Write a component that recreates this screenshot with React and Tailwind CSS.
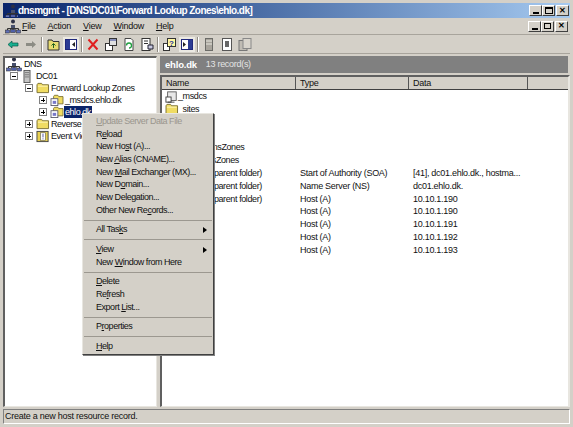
import clsx from "clsx";

const FONT = "font-['Liberation_Sans',Arial,sans-serif]";

function Folder() {
  return (
    <svg width="14" height="12" viewBox="0 0 15 13" className="shrink-0">
      <path d="M1 3 L2 1.5 H6 L7 3 H13.5 V11.5 H1 Z" fill="#f0dc62" stroke="#786e30" />
      <path d="M2 4.5 H12.5" stroke="#fff6c0" />
    </svg>
  );
}

function ZoneFolder() {
  return (
    <svg width="14" height="12" viewBox="0 0 16 14" className="shrink-0">
      <path d="M4 3 L5 1.5 H9 L10 3 H15 V11.5 H4 Z" fill="#f0dc62" stroke="#786e30" />
      <rect x="1" y="5.5" width="8" height="8" fill="#fff" stroke="#556" />
      <rect x="3" y="8" width="4" height="3.5" fill="#7878c8" />
    </svg>
  );
}

function DnsIcon() {
  return (
    <svg width="16" height="15" viewBox="0 0 16 15" className="shrink-0">
      <circle cx="8" cy="2.5" r="2" fill="#2c3044" />
      <path d="M6 6 H10 V9 H6 Z" fill="#47506c" />
      <path d="M8 9 V11 M2.5 11 V9.5 H13.5 V11" stroke="#333" fill="none" />
      <rect x="5.5" y="10.5" width="5" height="3" fill="#5060a8" stroke="#222" strokeWidth=".5" />
      <rect x="0.5" y="11" width="4" height="3" fill="#6070b8" stroke="#222" strokeWidth=".5" />
      <rect x="11.5" y="11" width="4" height="3" fill="#6070b8" stroke="#222" strokeWidth=".5" />
    </svg>
  );
}

function ServerIcon() {
  return (
    <svg width="12" height="13" viewBox="0 0 12 15" className="shrink-0">
      <rect x="2.5" y="0.5" width="7" height="14" fill="#c4c4c4" stroke="#505050" />
      <path d="M3.5 3 H8.5 M3.5 5.5 H8.5 M3.5 8 H8.5" stroke="#707070" />
    </svg>
  );
}

function EventIcon() {
  return (
    <svg width="14" height="13" viewBox="0 0 15 14" className="shrink-0">
      <rect x="1" y="1.5" width="12" height="11" fill="#e8d050" stroke="#444" />
      <rect x="5" y="3" width="5" height="8" fill="#fff" stroke="#555" strokeWidth=".6" />
      <path d="M7.5 4 V8 M7.5 9 V10" stroke="#5050a0" />
    </svg>
  );
}

function ListDnsIcon() {
  return (
    <svg width="13" height="12" viewBox="0 0 15 14" className="shrink-0">
      <rect x="3" y="1" width="10" height="10" fill="#e8e8e8" stroke="#555" />
      <rect x="1" y="7" width="6" height="6" fill="#fff" stroke="#333" />
      <path d="M3 13 H11" stroke="#333" />
    </svg>
  );
}

function Expander({ open }) {
  return (
    <span className="w-[8px] h-[8px] border border-[#808080] bg-white flex items-center justify-center relative shrink-0">
      <span className="w-[4px] h-px bg-black" />
      {!open && <span className="absolute w-px h-[4px] bg-black" />}
    </span>
  );
}

function TreeRow({ indent, open, icon, label, selected }) {
  return (
    <div className="flex items-center h-[12px]" style={{ paddingLeft: indent }}>
      <span className="w-[8px] mr-[3px] flex shrink-0">
        <Expander open={open} />
      </span>
      <span className="w-[14px] flex shrink-0">{icon}</span>
      <span className={clsx("px-px whitespace-nowrap leading-[12px]", selected && "bg-[#0a246a] text-white")}>{label}</span>
    </div>
  );
}

function TitleButton({ children, className }) {
  return (
    <span className={clsx("w-[13px] h-[11px] bg-[#d4d0c8] border border-t-white border-l-white border-r-[#404040] border-b-[#404040] flex items-center justify-center text-[8px] leading-none font-bold text-black", className)}>
      {children}
    </span>
  );
}

function ToolIcon({ children, className }) {
  return (
    <svg width="16" height="15" viewBox="0 0 16 15" className={clsx("shrink-0", className)}>
      {children}
    </svg>
  );
}

function Sep() {
  return <span className="w-[2px] h-[15px] border-l border-[#908c84] border-r border-r-white" />;
}

function Toolbar() {
  return (
    <div className="flex items-center h-[20px] pl-[2px] gap-[2px] border-t border-t-[#a8a49c] border-b border-b-[#a8a49c] shrink-0">
      <ToolIcon><path d="M3 7.5 L7 4 V6 H13 V9 H7 V11 Z" fill="#18b090" stroke="#0a5848" strokeWidth=".7" /></ToolIcon>
      <ToolIcon><path d="M13 7.5 L9 4 V6 H3 V9 H9 V11 Z" fill="#8c8c84" /></ToolIcon>
      <Sep />
      <ToolIcon><path d="M3 3 H7 L8 4.5 H14 V13 H3 Z" fill="#e8dc70" stroke="#333" /><path d="M8.5 11 V7 M6.5 8.5 L8.5 6.5 L10.5 8.5" stroke="#206020" fill="none" /></ToolIcon>
      <ToolIcon className="bg-[#ebe9e2]"><rect x="2.5" y="2.5" width="11" height="10" fill="#fff" stroke="#20287c" /><rect x="3" y="3" width="4" height="9" fill="#2c3c94" /><path d="M12 5 L9 7.5 L12 10 Z" fill="#222" /></ToolIcon>
      <Sep />
      <ToolIcon><path d="M3.5 2.5 L12.5 12.5 M12.5 2.5 L3.5 12.5" stroke="#e02020" strokeWidth="2" /></ToolIcon>
      <ToolIcon><rect x="2.5" y="6.5" width="7" height="7" fill="#fff" stroke="#333" /><rect x="6.5" y="1.5" width="7" height="7" fill="#e0e0e0" stroke="#333" /><path d="M7 3 H13" stroke="#2c3c94" /></ToolIcon>
      <ToolIcon><path d="M4 1.5 H10 L12 3.5 V13.5 H4 Z" fill="#fff" stroke="#444" /><path d="M5.5 8.5 A2.5 2.5 0 1 1 8 11" stroke="#20a040" fill="none" strokeWidth="1.3" /></ToolIcon>
      <ToolIcon><rect x="3" y="1.5" width="8" height="12" fill="#fff" stroke="#333" /><path d="M5 4 H9 M5 6.5 H9" stroke="#333" /><path d="M9 8 H14 V12 H9 Z" fill="#c8c8e0" stroke="#223" /></ToolIcon>
      <Sep />
      <ToolIcon><rect x="2.5" y="6.5" width="6" height="7" fill="#fff" stroke="#333" /><rect x="6.5" y="1.5" width="8" height="8" fill="#fff8a0" stroke="#333" /><text x="8" y="8.5" fontSize="8" fontWeight="700" fill="#2030a0" fontFamily="Liberation Sans, sans-serif">?</text></ToolIcon>
      <ToolIcon className="bg-[#ebe9e2]"><rect x="2.5" y="2.5" width="11" height="10" fill="#fff" stroke="#20287c" /><rect x="9" y="3" width="4" height="9" fill="#2c3c94" /><path d="M4 5 L7 7.5 L4 10 Z" fill="#222" /></ToolIcon>
      <Sep />
      <ToolIcon><rect x="4.5" y="1.5" width="7" height="12" fill="#a8a49c" stroke="#6c6c68" /><path d="M5 4 H11 M5 7 H11" stroke="#e8e8e0" /></ToolIcon>
      <ToolIcon><rect x="3.5" y="1.5" width="9" height="12" fill="#fff" stroke="#555" /><rect x="6" y="4" width="4" height="6" fill="#666" /></ToolIcon>
      <ToolIcon><rect x="2" y="3.5" width="8" height="10" fill="#c0bcb4" stroke="#777" /><rect x="6" y="1.5" width="8" height="10" fill="#d8d4cc" stroke="#888" /></ToolIcon>
    </div>
  );
}

const menuBar = [
  ["F", "ile"],
  ["A", "ction"],
  ["V", "iew"],
  ["W", "indow"],
  ["H", "elp"],
];

const tableRows = [
  ["_msdcs", "", "", "zone"],
  ["_sites", "", "", "folder"],
  ["_tcp", "", "", "folder"],
  ["_udp", "", "", "folder"],
  ["DomainDnsZones", "", "", "folder"],
  ["ForestDnsZones", "", "", "folder"],
  ["(same as parent folder)", "Start of Authority (SOA)", "[41], dc01.ehlo.dk., hostma...", "rec"],
  ["(same as parent folder)", "Name Server (NS)", "dc01.ehlo.dk.", "rec"],
  ["(same as parent folder)", "Host (A)", "10.10.1.190", "rec"],
  ["dc01", "Host (A)", "10.10.1.190", "rec"],
  ["srv1", "Host (A)", "10.10.1.191", "rec"],
  ["srv2", "Host (A)", "10.10.1.192", "rec"],
  ["srv3", "Host (A)", "10.10.1.193", "rec"],
];

const menuGroups = [
  [
    { pre: "", key: "U", post: "pdate Server Data File", disabled: true },
    { pre: "R", key: "e", post: "load" },
    { pre: "New Ho", key: "s", post: "t (A)..." },
    { pre: "New ", key: "A", post: "lias (CNAME)..." },
    { pre: "New ", key: "M", post: "ail Exchanger (MX)..." },
    { pre: "New D", key: "o", post: "main..." },
    { pre: "New Dele", key: "g", post: "ation..." },
    { pre: "Other New Re", key: "c", post: "ords..." },
  ],
  [{ pre: "All Tas", key: "k", post: "s", arrow: true }],
  [
    { pre: "", key: "V", post: "iew", arrow: true },
    { pre: "New ", key: "W", post: "indow from Here" },
  ],
  [
    { pre: "", key: "D", post: "elete" },
    { pre: "Re", key: "f", post: "resh" },
    { pre: "Export ", key: "L", post: "ist..." },
  ],
  [{ pre: "P", key: "r", post: "operties" }],
  [{ pre: "", key: "H", post: "elp" }],
];

function ContextMenu() {
  return (
    <div className="absolute left-[82px] top-[113px] w-[132px] bg-[#d4d0c8] border border-t-[#e8e6e0] border-l-[#e8e6e0] border-r-[#404040] border-b-[#404040] pt-px pb-px shadow-[1px_1px_0_#808080] tracking-[-0.47px] z-10">
      {menuGroups.map((group, i) => (
        <div key={i} className={clsx(i > 0 && "border-t border-t-[#9c9890] mt-[3px] pt-[3px] mx-px")}>
          {group.map((item) => (
            <div
              key={item.pre + item.key + item.post}
              className={clsx("h-[12.7px] pr-[5px] flex items-center justify-between whitespace-nowrap", i > 0 ? "pl-[12px]" : "pl-[13px]", item.disabled && "text-[#9a968e]")}
            >
              <span>
                {item.pre}
                <u>{item.key}</u>
                {item.post}
              </span>
              {item.arrow && <span className="w-0 h-0 border-y-[3.5px] border-y-transparent border-l-[4px] border-l-black" />}
            </div>
          ))}
        </div>
      ))}
    </div>
  );
}

export default function App() {
  return (
    <div className={clsx("relative w-[573px] h-[427px] overflow-hidden bg-[#d4d0c8] text-[9px] leading-[13px] text-[#111] flex flex-col p-[3px]", FONT)}>
      {/* title bar */}
      <div className="h-[15px] shrink-0 flex items-center pl-[2px] pr-px bg-gradient-to-r from-[#0a246a] to-[#a6caf0] text-white font-bold">
        <span className="w-[13px] h-[13px] shrink-0 flex overflow-hidden"><DnsIcon /></span>
        <span className="text-[10px] tracking-[-0.55px] whitespace-nowrap">dnsmgmt - [DNS\DC01\Forward Lookup Zones\ehlo.dk]</span>
        <span className="ml-auto flex items-center">
          <TitleButton><span className="w-[6px] h-[2px] bg-black mt-[5px]" /></TitleButton>
          <TitleButton><span className="w-[8px] h-[7px] border border-black border-t-2" /></TitleButton>
          <TitleButton className="ml-px">✕</TitleButton>
        </span>
      </div>

      {/* menu bar */}
      <div className="h-[16px] shrink-0 flex items-center pl-[2px] pr-[2px] tracking-[-0.25px]">
        <span className="w-[16px] shrink-0 flex"><DnsIcon /></span>
        <div className="flex ml-px gap-[12px]">
          {menuBar.map(([key, rest]) => (
            <span key={key}><u>{key}</u>{rest}</span>
          ))}
        </div>
        <span className="ml-auto flex items-center">
          <TitleButton><span className="w-[6px] h-[2px] bg-black mt-[5px]" /></TitleButton>
          <TitleButton><span className="w-[7px] h-[6px] border border-black" /></TitleButton>
          <TitleButton className="text-[#8c8880] ml-px">✕</TitleButton>
        </span>
      </div>

      <Toolbar />

      {/* panes */}
      <div className="flex flex-1 mt-[2px] min-h-0">
        <div className="w-[154px] bg-white border-t-2 border-l-2 border-[#606060] border-r border-r-[#e8e6e0] border-b border-b-[#e8e6e0] shrink-0 overflow-hidden tracking-[-0.45px]">
          <div className="flex items-center h-[12px]">
            <span className="w-[16px] ml-px flex shrink-0"><DnsIcon /></span>
            <span className="ml-[2px]">DNS</span>
          </div>
          <TreeRow indent={5} open icon={<ServerIcon />} label="DC01" />
          <TreeRow indent={20} open icon={<Folder />} label="Forward Lookup Zones" />
          <TreeRow indent={34} icon={<ZoneFolder />} label="_msdcs.ehlo.dk" />
          <TreeRow indent={34} icon={<ZoneFolder />} label="ehlo.dk" selected />
          <TreeRow indent={20} icon={<Folder />} label="Reverse Lookup Zones" />
          <TreeRow indent={20} icon={<EventIcon />} label="Event Viewer" />
        </div>
        <div className="w-[3px] shrink-0" />
        <div className="flex-1 flex flex-col min-w-0">
          <div className="h-[17px] mr-[2px] bg-[#808080] text-white flex items-center pl-[5px] shrink-0">
            <span className="font-bold text-[9.5px] tracking-[-0.2px]">ehlo.dk</span>
            <span className="ml-[9px] text-[#e4e4e4] tracking-[-0.3px]">13 record(s)</span>
          </div>
          <div className="flex-1 bg-white border-t-2 border-l-2 border-[#606060] border-r-2 border-r-[#e8e6e0] border-b border-b-[#e8e6e0] mt-[2px] min-h-0 tracking-[-0.28px]">
            <div className="grid grid-cols-[134px_113px_119px_1fr] h-[13px] bg-[#d4d0c8] border-b border-b-[#404040]">
              {["Name", "Type", "Data", ""].map((h, i) => (
                <span key={i} className={clsx("pl-[4px] leading-[12px] border-r border-r-[#555]", i === 3 && "border-r-0")}>{h}</span>
              ))}
            </div>
            <div>
              {tableRows.map(([name, type, data, kind], i) => (
                <div key={i} className="grid grid-cols-[134px_113px_119px_1fr] h-[12.83px] items-center">
                  <div className="flex items-center pl-[3px] whitespace-nowrap tracking-[-0.4px]">
                    <span className="w-[13px] flex shrink-0">{kind === "zone" ? <ListDnsIcon /> : kind === "folder" ? <Folder /> : null}</span>
                    <span>{name}</span>
                  </div>
                  <span className="pl-[4px] whitespace-nowrap">{type}</span>
                  <span className="pl-[4px] whitespace-nowrap">{data}</span>
                  <span />
                </div>
              ))}
            </div>
          </div>
        </div>
      </div>

      {/* status bar */}
      <div className="h-[15px] mt-[2px] pl-px flex items-center border border-t-[#808080] border-l-[#808080] border-r-white border-b-white shrink-0 tracking-[-0.25px]">
        Create a new host resource record.
      </div>

      <ContextMenu />
    </div>
  );
}
